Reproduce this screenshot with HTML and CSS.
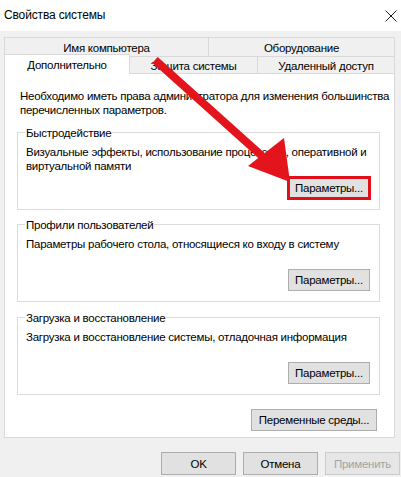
FILE: index.html
```html
<!DOCTYPE html>
<html lang="ru">
<head>
<meta charset="utf-8">
<title>Свойства системы</title>
<link rel="stylesheet" href="styles.css">
</head>
<body>
<div class="window">
  <header class="titlebar">
    <span class="title">Свойства системы</span>
    <svg class="close" width="12" height="12" viewBox="0 0 12 12"><path d="M0.5 0.5 L11.5 11.5 M11.5 0.5 L0.5 11.5" stroke="#1a1a1a" stroke-width="1" fill="none"/></svg>
  </header>
  <div class="content">
    <div class="tabs">
      <div class="tabrow row1">
        <div class="tab t1">Имя компьютера</div>
        <div class="tab t2">Оборудование</div>
      </div>
      <div class="tabrow row2">
        <div class="tab t3 selected">Дополнительно</div>
        <div class="tab t4">Защита системы</div>
        <div class="tab t5">Удаленный доступ</div>
      </div>
    </div>
    <div class="panel">
      <p class="intro">Необходимо иметь права администратора для изменения большинства<br>перечисленных параметров.</p>
      <section class="group g1">
        <span class="legend">Быстродействие</span>
        <p class="desc">Визуальные эффекты, использование процессора, оперативной и<br>виртуальной памяти</p>
        <button class="btn param highlight">Параметры...</button>
      </section>
      <section class="group g2">
        <span class="legend">Профили пользователей</span>
        <p class="desc">Параметры рабочего стола, относящиеся ко входу в систему</p>
        <button class="btn param">Параметры...</button>
      </section>
      <section class="group g3">
        <span class="legend">Загрузка и восстановление</span>
        <p class="desc">Загрузка и восстановление системы, отладочная информация</p>
        <button class="btn param">Параметры...</button>
      </section>
      <div class="envrow"><button class="btn env">Переменные среды...</button></div>
    </div>
    <div class="footer">
      <button class="btn foot">OK</button>
      <button class="btn foot">Отмена</button>
      <button class="btn foot disabled">Применить</button>
    </div>
  </div>
  <svg class="arrow" width="401" height="477" viewBox="0 0 401 477">
    <line x1="155" y1="60" x2="262" y2="156" stroke="#e3141c" stroke-width="8" stroke-linecap="butt"/>
    <polygon points="248,166 284,138 290,182" fill="#e3141c"/>
  </svg>
</div>
</body>
</html>
```

FILE: styles.css
```css
* { box-sizing: border-box; }
html, body { margin: 0; padding: 0; }
body {
  width: 401px;
  height: 477px;
  overflow: hidden;
  background: #f0f0f0;
  font-family: "Liberation Sans", Arial, sans-serif;
  font-size: 11.5px;
  letter-spacing: -0.25px;
  color: #000;
}
.window { position: relative; width: 401px; height: 477px; }
.titlebar {
  height: 31px;
  background: #fff;
  display: flex;
  align-items: center;
  justify-content: space-between;
  padding: 0 4px 1px 4px;
}
.title { font-size: 12px; letter-spacing: -0.15px; }
.close { margin-top: 2px; }
.content { padding: 6px 0 0 4px; }
.tabs { width: 391px; }
.tabrow { display: flex; }
.row1 { height: 20px; }
.row2 { height: 18px; margin-top: -1px; align-items: flex-start; }
.tab {
  border: 1px solid #d9d9d9;
  background: #f0f0f0;
  display: flex;
  align-items: center;
  justify-content: center;
  height: 100%;
  white-space: nowrap;
  line-height: 14px;
  padding-top: 1px;
}
.tab + .tab { margin-left: -1px; }
.t1 { width: 205px; }
.t2 { width: 187px; }
.t3 { width: 126px; }
.t4 { width: 129px; }
.t5 { width: 138px; }
.tab.selected {
  background: #fff;
  border-bottom: none;
  height: 20px;
  margin-top: -2px;
  padding-top: 0;
  position: relative;
  z-index: 1;
}
.panel {
  margin-top: -1px;
  width: 391px;
  height: 365px;
  background: #fff;
  border: 1px solid #d9d9d9;
  padding: 15px 14px 0 12px;
}
.intro {
  margin: 0 0 15px 3px;
  line-height: 14px;
  white-space: nowrap;
}
.group {
  border: 1px solid #dcdcdc;
  height: 78px;
  display: flex;
  flex-direction: column;
  align-items: flex-start;
  padding: 0 9px 10px 8px;
}
.g2 { margin-top: 14px; }
.g3 { margin-top: 15px; }
.legend {
  margin-top: -8px;
  margin-left: -1px;
  padding: 0 1px;
  background: #fff;
  line-height: 16px;
}
.desc {
  margin: 4px 0 0 0;
  line-height: 14px;
  white-space: nowrap;
}
.btn {
  font-family: inherit;
  font-size: 11.5px;
  letter-spacing: -0.25px;
  color: #000;
  background: #e1e1e1;
  border: 1px solid #adadad;
  height: 22px;
  padding: 0;
  margin: 0;
  line-height: 18px;
  white-space: nowrap;
}
.param {
  width: 82px;
  margin-top: auto;
  align-self: flex-end;
}
.highlight {
  outline: 3px solid #e0101a;
  outline-offset: -2px;
}
.envrow {
  display: flex;
  justify-content: flex-end;
  padding-right: 3px;
  margin-top: 14px;
}
.env { width: 126px; }
.footer {
  display: flex;
  justify-content: flex-end;
  gap: 7px;
  margin-top: 14px;
  padding-right: 1px;
}
.foot { width: 75px; height: 23px; }
.foot.disabled {
  background: #e6e6e6;
  border-color: #cccccc;
  color: #a3a3a3;
}
.arrow {
  position: absolute;
  left: 0;
  top: 0;
  pointer-events: none;
  z-index: 5;
}
```
